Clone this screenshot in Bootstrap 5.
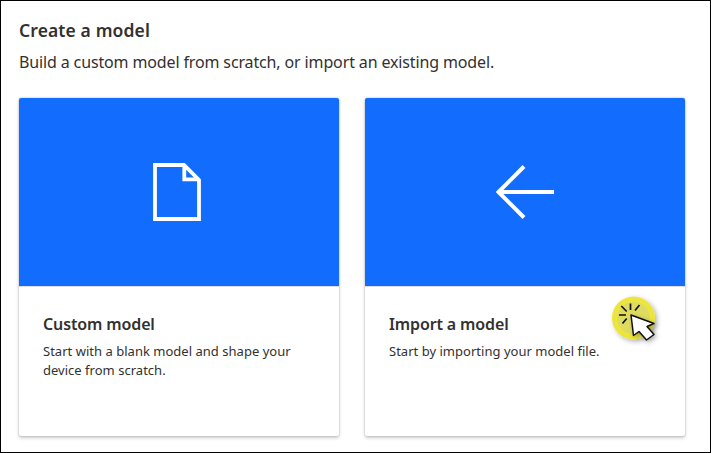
<!DOCTYPE html>
<html lang="en">
<head>
<meta charset="utf-8">
<title>Create a model</title>
<link rel="stylesheet" href="https://cdn.jsdelivr.net/npm/bootstrap@5.3.0/dist/css/bootstrap.min.css">
<style>
body{font-family:"Noto Sans","Open Sans",sans-serif;color:#323130;background:#fff}
.frame{width:711px;height:453px;border:1px solid #000;padding:16px 25px 0 18px}
.page-title{font-size:17.5px;line-height:26px;font-weight:600;letter-spacing:.12px;white-space:nowrap}
.intro{font-size:16px;line-height:24px;margin-top:7px;letter-spacing:-.135px;white-space:nowrap}
.tiles{display:grid;grid-template-columns:320px 320px;column-gap:26px;margin-top:24px}
.tile{height:338px;border-radius:2px;box-shadow:0 1.6px 3.6px rgba(0,0,0,.2),0 0 2px rgba(0,0,0,.24)}
.tile-hero{height:189px;background:#126dff;border-bottom:1px solid #dcdcdc;border-radius:2px 2px 0 0}
.tile-text{padding:25px 24px 0}
.tile-title{font-size:16px;line-height:24px;font-weight:600;letter-spacing:-.13px;white-space:nowrap}
.tile-desc{font-size:13px;line-height:19px;margin-top:6px;letter-spacing:.02px;white-space:nowrap}
.pointer{left:239px;top:192px}
</style>
<script src="https://cdn.jsdelivr.net/npm/bootstrap@5.3.0/dist/js/bootstrap.bundle.min.js"></script>
</head>
<body class="overflow-hidden">
<main class="frame">
  <h1 class="page-title mb-0">Create a model</h1>
  <p class="intro mb-0">Build a custom model from scratch, or import an existing model.</p>
  <div class="tiles">
    <section class="tile bg-white">
      <div class="tile-hero d-flex">
        <svg width="320" height="188" fill="none" stroke="#fff" stroke-width="3.800"><path d="M136 67H165L180 82V121H136ZM165.300 67V81.300H180" /></svg>
      </div>
      <div class="tile-text">
        <h2 class="tile-title mb-0">Custom model</h2>
        <p class="tile-desc mb-0">Start with a blank model and shape your<br>device from scratch.</p>
      </div>
    </section>
    <section class="tile bg-white position-relative">
      <div class="tile-hero d-flex">
        <svg width="320" height="188" fill="none" stroke="#fff" stroke-width="4"><path d="M189 94H134M159 68.500L133.500 94L159 119.500" /></svg>
      </div>
      <div class="tile-text">
        <h2 class="tile-title mb-0">Import a model</h2>
        <p class="tile-desc mb-0">Start by importing your model file.</p>
      </div>
      <svg class="pointer position-absolute" width="62" height="58" viewBox="0 0 62 58">
        <defs><filter id="soft" x="-30%" y="-30%" width="170%" height="170%"><feDropShadow dx="2" dy="2" stdDeviation="2.500" flood-color="#000" flood-opacity=".3"/></filter></defs>
        <g filter="url(#soft)">
          <circle cx="29.500" cy="28" r="21.500" fill="#ebe53e"/>
          <circle cx="29.500" cy="28" r="17" fill="#dfdb60" stroke="#f0eb35"/>
        </g>
        <path d="M26.500 20V13.500M31 20.500L35.500 15M22.700 21.500L17.300 16M22 25H15M22.700 28.500L18.500 33.500" stroke="#111" stroke-width="1.700"/>
        <path d="M27 25L29.500 45.500L35 41.500L42.500 50L50 44.500L43 36.500L50 33.500Z" fill="#fff" stroke="#111" stroke-width="1.500" stroke-linejoin="round" filter="url(#soft)"/>
      </svg>
    </section>
  </div>
</main>
</body>
</html>
